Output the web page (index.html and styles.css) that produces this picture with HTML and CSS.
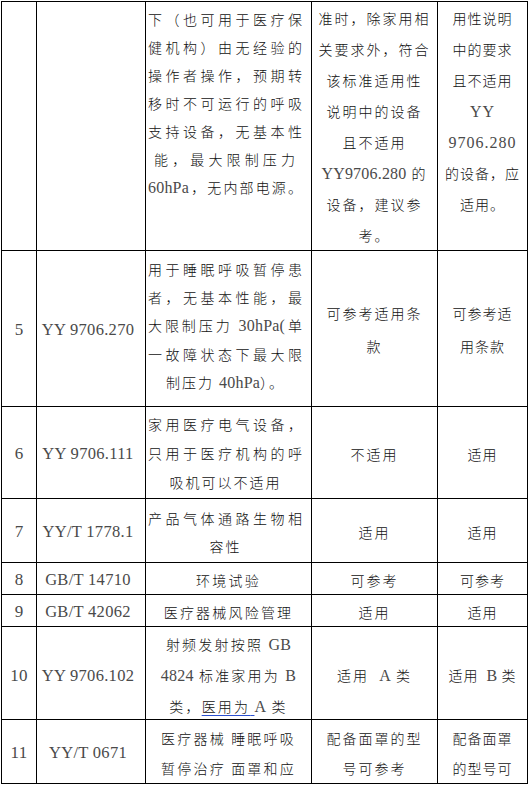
FILE: index.html
```html
<!DOCTYPE html>
<html lang="zh">
<head>
<meta charset="utf-8">
<title>标准适用性</title>
<link rel="stylesheet" href="styles.css">
</head>
<body>
<div class="grid">
  <!-- row 1 -->
  <div class="c r1"></div>
  <div class="c r1"></div>
  <div class="c top j t3">
    <div class="ln">下（也可用于医疗保</div>
    <div class="ln">健机构）由无经验的</div>
    <div class="ln">操作者操作，预期转</div>
    <div class="ln">移时不可运行的呼吸</div>
    <div class="ln">支持设备，无基本性</div>
    <div class="ln ind">能，最大限制压力</div>
    <div class="ln"><span class="lat">60hPa</span>，无内部电源。</div>
  </div>
  <div class="c top t45 w4">
    <div class="ln">准时，除家用相</div>
    <div class="ln">关要求外，符合</div>
    <div class="ln">该标准适用性</div>
    <div class="ln">说明中的设备</div>
    <div class="ln">且不适用</div>
    <div class="ln"><span class="lat">YY9706.280</span> 的</div>
    <div class="ln">设备，建议参</div>
    <div class="ln">考。</div>
  </div>
  <div class="c top t45 w5">
    <div class="ln">用性说明</div>
    <div class="ln">中的要求</div>
    <div class="ln">且不适用</div>
    <div class="ln lat">YY</div>
    <div class="ln lat">9706.280</div>
    <div class="ln">的设备，应</div>
    <div class="ln">适用。</div>
  </div>

  <!-- row 2 -->
  <div class="c lat num">5</div>
  <div class="c lat code">YY 9706.270</div>
  <div class="c j up">
    <div class="ln">用于睡眠呼吸暂停患</div>
    <div class="ln">者，无基本性能，最</div>
    <div class="ln">大限制压力 <span class="lat">30hPa(</span>单</div>
    <div class="ln">一故障状态下最大限</div>
    <div class="ln mid">制压力 <span class="lat">40hPa</span>）。</div>
  </div>
  <div class="c w4 tall">
    <div class="ln">可参考适用条</div>
    <div class="ln">款</div>
  </div>
  <div class="c w5 tall">
    <div class="ln">可参考适</div>
    <div class="ln">用条款</div>
  </div>

  <!-- row 3 -->
  <div class="c lat num">6</div>
  <div class="c lat code">YY 9706.111</div>
  <div class="c j lh29">
    <div class="ln">家用医疗电气设备，</div>
    <div class="ln">只用于医疗机构的呼</div>
    <div class="ln mid">吸机可以不适用</div>
  </div>
  <div class="c w4"><div class="ln">不适用</div></div>
  <div class="c w5"><div class="ln">适用</div></div>

  <!-- row 4 -->
  <div class="c lat num">7</div>
  <div class="c lat code">YY/T 1778.1</div>
  <div class="c j">
    <div class="ln">产品气体通路生物相</div>
    <div class="ln mid">容性</div>
  </div>
  <div class="c w4"><div class="ln">适用</div></div>
  <div class="c w5"><div class="ln">适用</div></div>

  <!-- row 5 -->
  <div class="c lat num">8</div>
  <div class="c lat code">GB/T 14710</div>
  <div class="c w3"><div class="ln">环境试验</div></div>
  <div class="c w4"><div class="ln">可参考</div></div>
  <div class="c w5"><div class="ln">可参考</div></div>

  <!-- row 6 -->
  <div class="c lat num">9</div>
  <div class="c lat code">GB/T 42062</div>
  <div class="c w3"><div class="ln">医疗器械风险管理</div></div>
  <div class="c w4"><div class="ln">适用</div></div>
  <div class="c w5"><div class="ln">适用</div></div>

  <!-- row 7 -->
  <div class="c lat num r7">10</div>
  <div class="c lat code r7">YY 9706.102</div>
  <div class="c w3 r7 lh30">
    <div class="ln">射频发射按照 <span class="lat">GB</span></div>
    <div class="ln"><span class="lat">4824</span> 标准家用为 <span class="lat">B</span></div>
    <div class="ln">类，<span class="ul">医用为<span class="lat"> </span></span><span class="lat">A</span> 类</div>
  </div>
  <div class="c w4 r7"><div class="ln">适用&nbsp; <span class="lat">A</span> 类</div></div>
  <div class="c w5 r7"><div class="ln">适用&nbsp; <span class="lat">B</span> 类</div></div>

  <!-- row 8 -->
  <div class="c lat num">11</div>
  <div class="c lat code">YY/T 0671</div>
  <div class="c w3 lh30">
    <div class="ln">医疗器械 睡眠呼吸</div>
    <div class="ln">暂停治疗 面罩和应</div>
  </div>
  <div class="c w4 lh30">
    <div class="ln">配备面罩的型</div>
    <div class="ln">号可参考</div>
  </div>
  <div class="c w5 lh30">
    <div class="ln">配备面罩</div>
    <div class="ln">的型号可</div>
  </div>
</div>
</body>
</html>
```

FILE: styles.css
```css
html, body {
  margin: 0;
  padding: 0;
  background: #ffffff;
}

body {
  font-family: "Noto Sans CJK SC", "Liberation Serif", serif;
  color: #111;
}

.grid {
  margin: 1px 0 0 1px;
  width: 527px;
  display: grid;
  grid-template-columns: 34px 108px 165px 125px 89px;
  grid-template-rows: 248px 155px 91px 63px 31px 31px 92px 63px;
  gap: 1px;
  padding: 1px;
  box-sizing: border-box;
  background: #000;
}

.c {
  background: #fff;
  display: flex;
  flex-direction: column;
  justify-content: center;
  align-items: stretch;
  padding: 2px 0 0;
  box-sizing: border-box;
  text-align: center;
  font-size: 14px;
  font-weight: 300;
  line-height: 28px;
  overflow: hidden;
}

.c.top {
  justify-content: flex-start;
}

.c.t3 {
  padding-top: 3px;
  line-height: 28px;
}

.c.t45 {
  padding-top: 1px;
  line-height: 31px;
}

.c.up {
  padding: 0 0 5px;
}

.c.r7 {
  padding-top: 5px;
}

.lat {
  font-family: "Liberation Serif", "Times New Roman", serif;
  font-weight: 400;
  font-size: 16px;
  letter-spacing: 0.2px;
  color: #4a4a4a;
}

.num {
  font-size: 17px;
}

.code {
  font-size: 16.5px;
  letter-spacing: 0.3px;
  padding-right: 6px;
}

.ln {
  white-space: nowrap;
}

.j .ln {
  text-align: justify;
  text-align-last: justify;
  padding: 0 9px 0 2px;
}

.j .ln.ind {
  padding: 0 16px 0 8px;
}

.j .ln.mid {
  text-align: center;
  text-align-last: center;
  padding: 0 6px 0 0;
  letter-spacing: 2px;
}

.w3 .ln {
  letter-spacing: 2.2px;
}

.w4 .ln {
  letter-spacing: 2px;
}

.w5 .ln {
  letter-spacing: 1px;
}

.tall {
  line-height: 33px;
}

.lh29 {
  line-height: 29px;
}

.lh30 {
  line-height: 30px;
}

.ul {
  text-decoration: underline;
  text-decoration-color: #2a4fd0;
  text-underline-offset: 3px;
}
```
